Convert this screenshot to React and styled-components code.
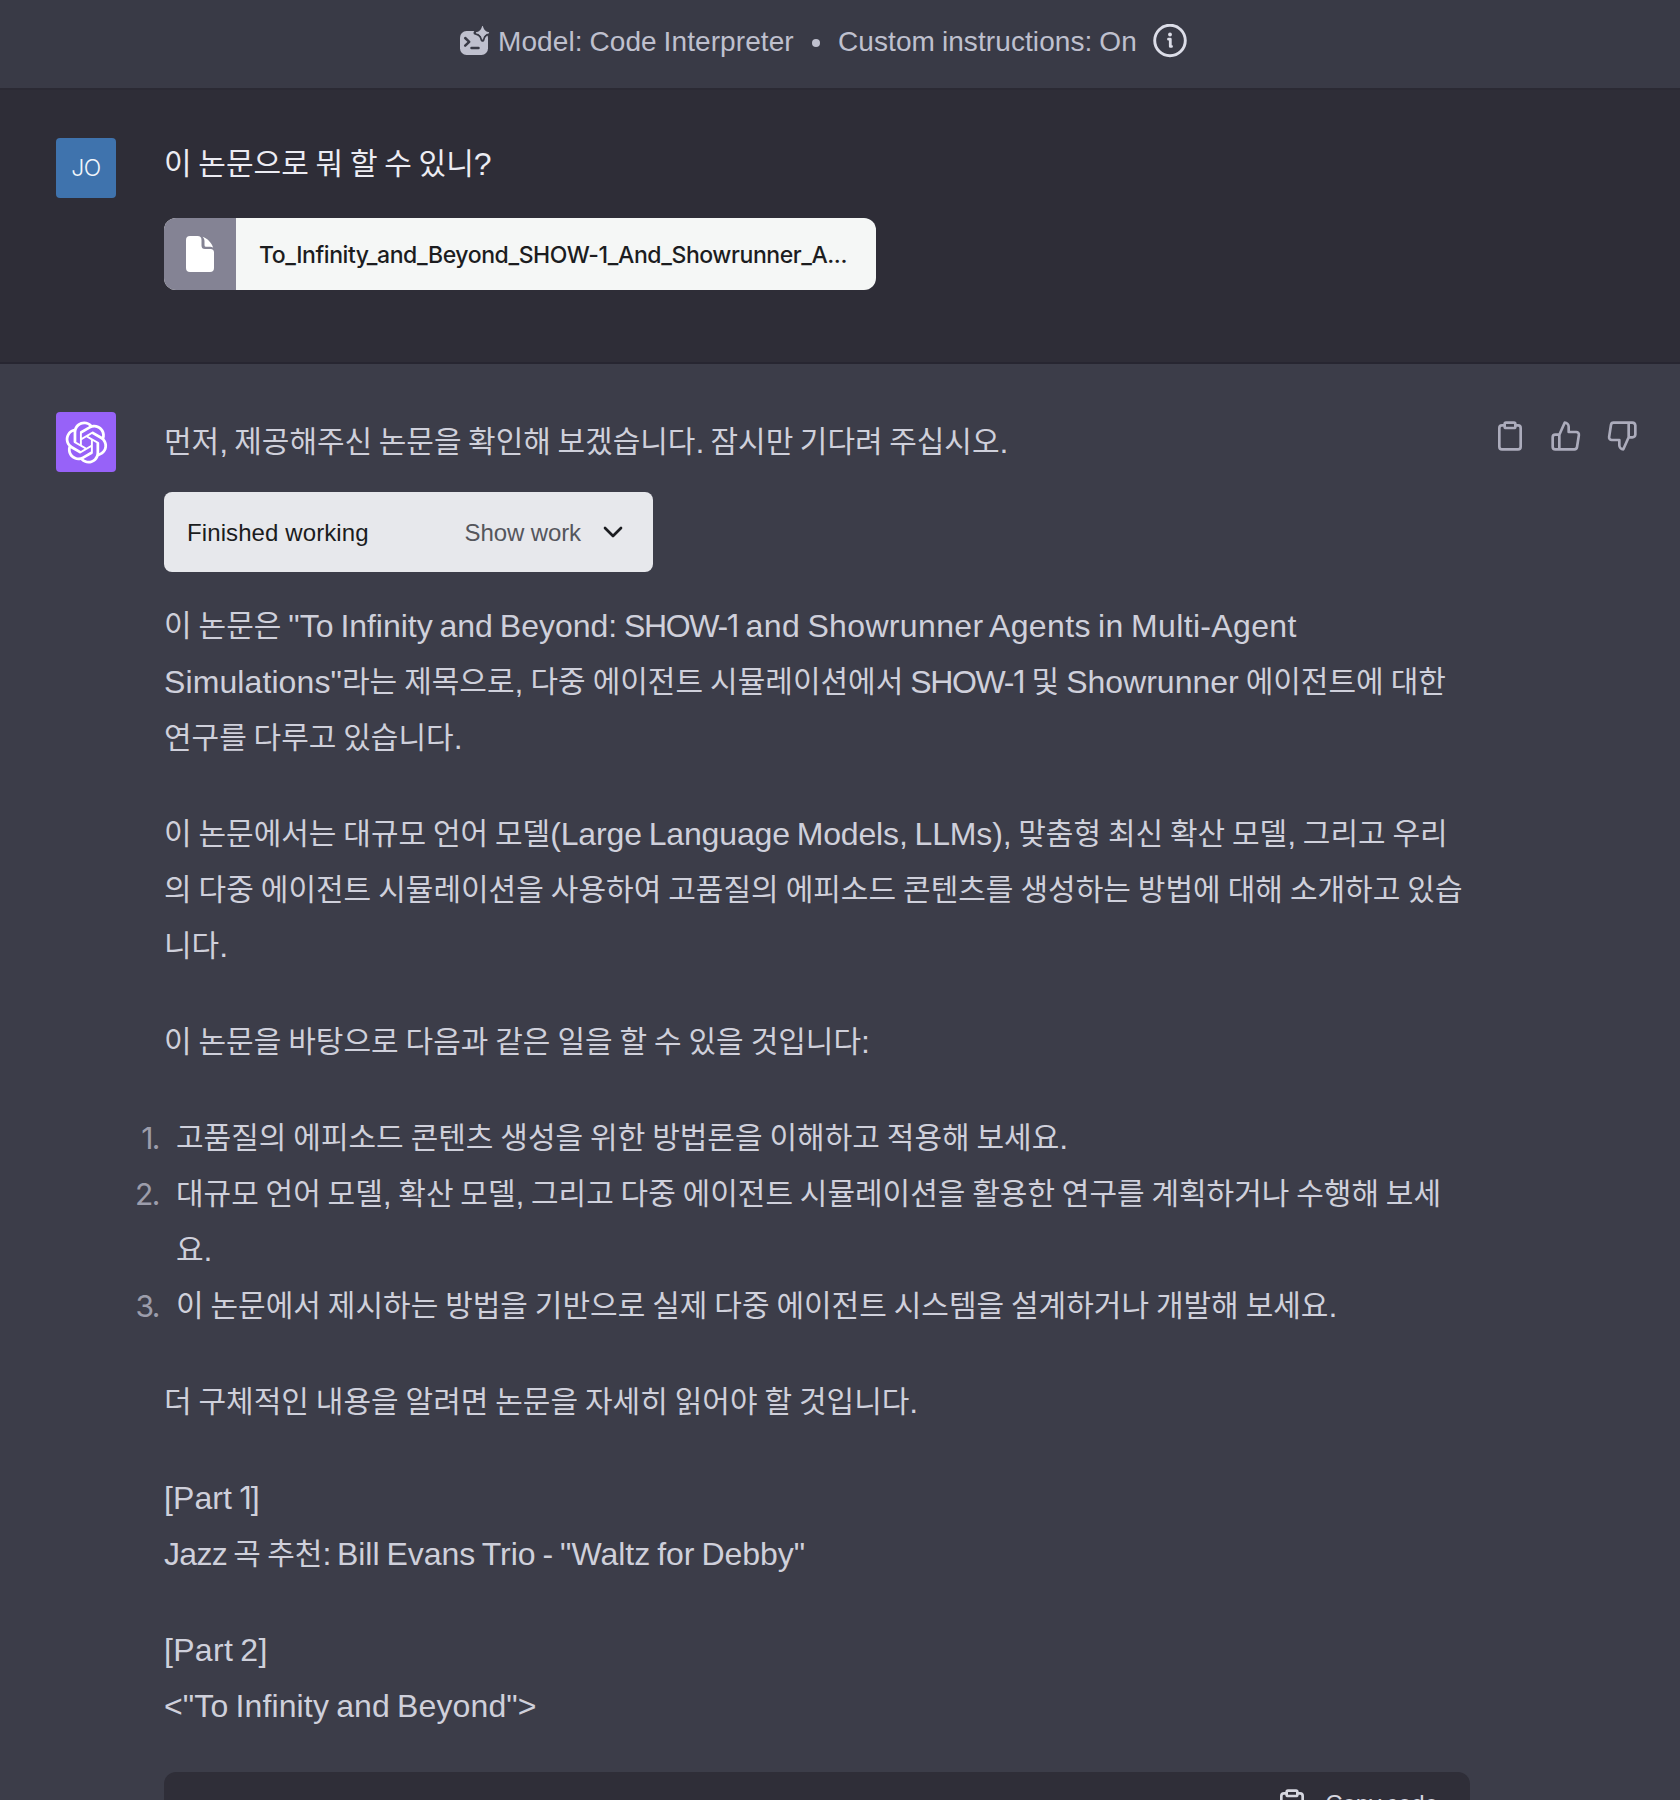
import React from 'react'
import styled, { createGlobalStyle } from 'styled-components'
import { FiChevronDown, FiClipboard, FiThumbsDown, FiThumbsUp } from 'react-icons/fi'

const GlobalStyle = createGlobalStyle`
  * {
    box-sizing: border-box;
  }

  body {
    background: #3c3d49;
    margin: 0;
  }
`

const Page = styled.div`
  background: #3c3d49;
  color: #cfd0db;
  font-family: 'Liberation Sans', 'Noto Sans CJK KR', sans-serif;
  height: 1800px;
  overflow: hidden;
  width: 1680px;
  word-spacing: -1.9px;
`

const ModelBar = styled.header`
  align-items: center;
  background: #393a46;
  border-bottom: 2px solid #2b2a34;
  color: #bfc0ce;
  display: flex;
  font-size: 28px;
  height: 90px;
  letter-spacing: 0.09px;
  padding: 0 0 6px 458px;
  white-space: nowrap;
  word-spacing: -1px;

  svg {
    flex: none;
  }
`

const ModelName = styled.span`
  margin-left: 8px;
  padding-top: 1px;
  width: 297px;
`

const Dot = styled.span`
  background: #bfc0ce;
  border-radius: 50%;
  height: 8px;
  margin: 3px 18px 0 17px;
  width: 8px;
`

const Instructions = styled.span`
  margin-right: 15px;
  padding-top: 1px;
  width: 300px;
`

const Turn = styled.section`
  background: ${p => p.$user ? '#2e2d37' : '#3c3d49'};
  border-bottom: ${p => p.$user ? '2px solid #272631' : 'none'};
  color: ${p => p.$user ? '#ececf3' : '#cfd0db'};
  display: flex;
  height: ${p => p.$user ? '274px' : 'auto'};
  padding: 48px 0 0 56px;
`

const Avatar = styled.div`
  align-items: center;
  background: ${p => p.$color};
  border-radius: 4px;
  color: #f2f6fb;
  display: flex;
  flex: none;
  font-family: 'Inter', sans-serif;
  font-size: 23px;
  font-weight: 300;
  height: 60px;
  justify-content: center;
  letter-spacing: -0.5px;
  margin-right: 48px;
  width: 60px;
`

const Body = styled.div`
  flex: none;
  margin-top: ${p => p.$top};
  width: 1306px;
`

const Paragraph = styled.p`
  font-size: 32px;
  line-height: 56px;
  margin: 0 0 ${p => p.$gap || '40px'};
  white-space: nowrap;
`

const Line = styled.span`
  display: block;
  height: 56px;
`

const Run = styled.span`
  letter-spacing: ${p => p.$track};
`

const Hangul = styled.span`
  font-family: 'Noto Sans CJK KR', sans-serif;
  font-size: 30px;
  letter-spacing: 0;
  line-height: 0;
  vertical-align: 1px;
`

const One = styled.span`
  font-family: 'Inter', sans-serif;
  font-size: 31px;
  letter-spacing: -1px;
  line-height: 0;
`

const List = styled.ol`
  font-size: 32px;
  line-height: 56px;
  list-style: none;
  margin: 0 0 40px;
  padding: 0;
  white-space: nowrap;
`

const Item = styled.li`
  display: flex;
  margin-left: -44px;
`

const Marker = styled.span`
  color: #9c9dab;
  flex: none;
  font-family: 'Inter', sans-serif;
  font-size: 30px;
  letter-spacing: -1.5px;
  margin-right: 17px;
  text-align: right;
  width: 39px;
`

const FileChip = styled.div`
  background: #f5f7f6;
  border-radius: 12px;
  display: flex;
  height: 72px;
  overflow: hidden;
  width: 712px;
`

const FileIcon = styled.div`
  align-items: center;
  background: #848394;
  display: flex;
  justify-content: center;
  width: 72px;
`

const FileName = styled.div`
  color: #1c1d1f;
  font-family: 'Inter', sans-serif;
  font-size: 23px;
  font-weight: 500;
  letter-spacing: -0.43px;
  line-height: 74px;
  padding-left: 23px;
  white-space: nowrap;
`

const WorkBox = styled.div`
  align-items: center;
  background: #e7e8ec;
  border-radius: 8px;
  color: #1b1c20;
  display: flex;
  font-size: 24px;
  height: 80px;
  justify-content: space-between;
  margin-bottom: 26px;
  padding: 0 24px 0 23px;
  width: 489px;
  word-spacing: 0;
`

const WorkLabel = styled.span`
  letter-spacing: ${p => p.$track};
  padding-top: 2px;
`

const ShowWork = styled.div`
  align-items: center;
  color: #55565c;
  display: flex;
  gap: 16px;

  svg {
    color: #1b1c20;
  }
`

const Actions = styled.div`
  color: #acacbc;
  display: flex;
  gap: 24px;
  margin: 8px 0 0 24px;
`

const CodeBlock = styled.div`
  background: #2f2e38;
  border-radius: 12px;
  height: 400px;
  margin-top: -2px;
`

const CodeBar = styled.div`
  align-items: center;
  color: #d6d7e0;
  display: flex;
  font-size: 24px;
  gap: 17px;
  height: 64px;
  justify-content: flex-end;
  padding-right: 32px;
`

// Hangul is set slightly smaller than the latin text around it
const mix = text => text.split(/([\uac00-\ud7a3]+|1)/).map((part, i) => {
  if (i % 2 === 0) return part
  return part === '1' ? <One key={ i }>{part}</One> : <Hangul key={ i }>{part}</Hangul>
})

// a line is a list of [text, tracking] runs
const TextLine = ({ runs }) => (
  <Line>
    { runs.map( ([text, track = '0']) => <Run key={ text } $track={ track }>{mix(text)}</Run> ) }
  </Line>
)

const Lines = ({ lines, gap }) => (
  <Paragraph $gap={ gap }>
    { lines.map( runs => <TextLine key={ runs[0][0] } runs={ runs } /> ) }
  </Paragraph>
)

const paragraphs = [
  [
    [['이 논문은 "To Infinity and Beyond: ', '-0.03px'], ['SHOW-1', '-1.4px'], [' and Showrunner Agents in Multi-Agent', '0.35px']],
    [['Simulations"', '0.1px'], ['라는 제목으로, 다중 에이전트 시뮬레이션에서 '], ['SHOW-1', '-1.4px'], [' 및 Showrunner 에이전트에 대한']],
    [['연구를 다루고 있습니다.', '-0.2px']]
  ],
  [
    [['이 논문에서는 대규모 언어 모델(Large Language Models, LLMs), 맞춤형 최신 확산 모델, 그리고 우리', '-0.15px']],
    [['의 다중 에이전트 시뮬레이션을 사용하여 고품질의 에피소드 콘텐츠를 생성하는 방법에 대해 소개하고 있습']],
    [['니다.']]
  ],
  [
    [['이 논문을 바탕으로 다음과 같은 일을 할 수 있을 것입니다:', '-0.1px']]
  ]
]

const items = [
  [
    [['고품질의 에피소드 콘텐츠 생성을 위한 방법론을 이해하고 적용해 보세요.', '-0.1px']]
  ],
  [
    [['대규모 언어 모델, 확산 모델, 그리고 다중 에이전트 시뮬레이션을 활용한 연구를 계획하거나 수행해 보세', '-0.2px']],
    [['요.']]
  ],
  [
    [['이 논문에서 제시하는 방법을 기반으로 실제 다중 에이전트 시스템을 설계하거나 개발해 보세요.', '-0.1px']]
  ]
]

const closing = [
  [
    [['더 구체적인 내용을 알려면 논문을 자세히 읽어야 할 것입니다.', '-0.1px']]
  ],
  [
    [['[Part 1]', '0.1px']],
    [['Jazz 곡 추천: ', '-0.7px'], ['Bill Evans Trio - "Waltz for Debby"', '-0.02px']]
  ],
  [
    [['[Part 2]', '0.3px']],
    [['<"To Infinity and Beyond">', '0.13px']]
  ]
]

const InterpreterIcon = () => (
  <svg width="32" height="32" viewBox="0 0 32 32" fill="none">
    <rect x="2" y="6" width="28" height="24" rx="6.5" fill="#bfc0ce" />
    <path d="M7.200 13l4 3.800-4 3.800M13.500 23h7" stroke="#393a46" strokeWidth="2.500" strokeLinecap="round" strokeLinejoin="round" />
    <path
      d="M24.500.8C25.300 5 27.300 7 31.500 7.800 27.300 8.600 25.300 10.600 24.500 14.800 23.700 10.600 21.700 8.600 17.500 7.800 21.700 7 23.700 5 24.500.8z"
      fill="#bfc0ce"
      stroke="#393a46"
      strokeWidth="4"
      strokeLinejoin="round"
      paintOrder="stroke"
    />
    <path
      d="M24.500 1.300C25.300 5 27.300 7 31 7.800 27.300 8.600 25.300 10.600 24.500 14.300 23.700 10.600 21.700 8.600 18 7.800 21.700 7 23.700 5 24.500 1.300z"
      fill="#bfc0ce"
      stroke="#bfc0ce"
      strokeWidth=".8"
      strokeLinejoin="round"
    />
  </svg>
)

const InfoIcon = () => (
  <svg width="34" height="34" viewBox="0 0 34 34" fill="none" stroke="#dcdde8" strokeLinecap="round" strokeLinejoin="round">
    <circle cx="17" cy="16.500" r="15.300" strokeWidth="2.900" />
    <circle cx="17" cy="10.500" r="1.900" fill="#dcdde8" stroke="none" />
    <path d="M15.500 15.200h1.800v7.200h1.200" strokeWidth="2.800" />
  </svg>
)

const PageIcon = () => (
  <svg width="28" height="36" viewBox="0 0 28 36" fill="#ffffff">
    <path d="M4 0h7.500a4 4 0 0 1 4 4v5.500a3.500 3.500 0 0 0 3.500 3.500h5.500A3.500 3.500 0 0 1 28 16.500V32a4 4 0 0 1-4 4H4a4 4 0 0 1-4-4V4a4 4 0 0 1 4-4z" />
    <path d="M16.500.8C21.500 2.500 25.500 6.500 27.200 11.800 26.200 11 25 10.700 23.500 10.700H20a1.500 1.500 0 0 1-1.500-1.500V5.500C18.500 3.500 17.800 2 16.500.8z" />
  </svg>
)

const Logo = () => (
  <svg width="43" height="43" viewBox="0 0 41 41" fill="#ffffff">
    <path d="M37.5324 16.8707C37.9808 15.5241 38.1363 14.0974 37.9886 12.6859C37.8409 11.2744 37.3934 9.91076 36.676 8.68622C35.6126 6.83404 33.9882 5.3676 32.0373 4.4985C30.0864 3.62941 27.9098 3.40259 25.8215 3.85078C24.8796 2.7893 23.7219 1.94125 22.4257 1.36341C21.1295 0.785575 19.7249 0.491269 18.3058 0.500197C16.1708 0.495044 14.0893 1.16803 12.3614 2.42214C10.6335 3.67624 9.34853 5.44666 8.6917 7.47815C7.30085 7.76286 5.98686 8.3414 4.8377 9.17505C3.68854 10.0087 2.73073 11.0782 2.02839 12.312C0.956464 14.1591 0.498905 16.2988 0.721698 18.4228C0.944492 20.5467 1.83612 22.5449 3.268 24.1293C2.81966 25.4759 2.66413 26.9026 2.81182 28.3141C2.95951 29.7256 3.40701 31.0892 4.12437 32.3138C5.18791 34.1659 6.8123 35.6322 8.76321 36.5013C10.7141 37.3704 12.8907 37.5973 14.9789 37.1492C15.9208 38.2107 17.0786 39.0587 18.3747 39.6366C19.6709 40.2144 21.0755 40.5087 22.4946 40.4998C24.6307 40.5054 26.7133 39.8321 28.4418 38.5772C30.1704 37.3223 31.4556 35.5506 32.1119 33.5179C33.5027 33.2332 34.8167 32.6547 35.9659 31.821C37.115 30.9874 38.0728 29.9178 38.7752 28.684C39.8458 26.8371 40.3023 24.6979 40.0789 22.5748C39.8556 20.4517 38.9639 18.4544 37.5324 16.8707ZM22.4978 37.8849C20.7443 37.8874 19.0459 37.2733 17.6994 36.1501C17.7601 36.117 17.8666 36.0586 17.936 36.0161L25.9004 31.4156C26.1003 31.3019 26.2663 31.137 26.3813 30.9378C26.4964 30.7386 26.5563 30.5124 26.5549 30.2825V19.0542L29.9213 20.998C29.9389 21.0068 29.9541 21.0198 29.9656 21.0359C29.977 21.052 29.9842 21.0707 29.9867 21.0902V30.3889C29.9842 32.375 29.1946 34.2791 27.7909 35.6841C26.3872 37.0892 24.4838 37.8806 22.4978 37.8849ZM6.39227 31.0064C5.51397 29.4888 5.19742 27.7107 5.49804 25.9832C5.55718 26.0187 5.66048 26.0818 5.73461 26.1244L13.699 30.7248C13.8975 30.8408 14.1233 30.902 14.3532 30.902C14.583 30.902 14.8088 30.8408 15.0073 30.7248L24.731 25.1103V28.9979C24.7321 29.0177 24.7283 29.0376 24.7199 29.0556C24.7115 29.0736 24.6988 29.0893 24.6829 29.1012L16.6317 33.7497C14.9096 34.7416 12.8643 35.0097 10.9447 34.4954C9.02506 33.9811 7.38785 32.7263 6.39227 31.0064ZM4.29707 13.6194C5.17156 12.0998 6.55279 10.9364 8.19885 10.3327C8.19885 10.4013 8.19491 10.5228 8.19491 10.6071V19.808C8.19351 20.0378 8.25334 20.2638 8.36823 20.4629C8.48312 20.6619 8.64893 20.8267 8.84863 20.9404L18.5723 26.5542L15.206 28.4979C15.1894 28.5089 15.1703 28.5155 15.1505 28.5173C15.1307 28.5191 15.1107 28.516 15.0924 28.5082L7.04046 23.8557C5.32135 22.8601 4.06716 21.2235 3.55289 19.3046C3.03862 17.3858 3.30624 15.3413 4.29707 13.6194ZM31.955 20.0556L22.2312 14.4411L25.5976 12.4981C25.6142 12.4872 25.6333 12.4805 25.6531 12.4787C25.6729 12.4769 25.6928 12.4801 25.7111 12.4879L33.7631 17.1364C34.9967 17.849 36.0017 18.8982 36.6606 20.1613C37.3194 21.4244 37.6047 22.849 37.4832 24.2684C37.3617 25.6878 36.8382 27.0432 35.9743 28.1759C35.1103 29.3086 33.9415 30.1717 32.6047 30.6641C32.6047 30.5947 32.6047 30.4733 32.6047 30.3889V21.188C32.6066 20.9586 32.5474 20.7328 32.4332 20.5338C32.319 20.3348 32.154 20.1698 31.955 20.0556ZM35.3055 15.0128C35.2464 14.9765 35.1431 14.9142 35.069 14.8717L27.1045 10.2712C26.906 10.1554 26.6803 10.0943 26.4504 10.0943C26.2206 10.0943 25.9948 10.1554 25.7963 10.2712L16.0726 15.8858V11.9982C16.0715 11.9783 16.0753 11.9585 16.0837 11.9405C16.0921 11.9225 16.1048 11.9068 16.1207 11.8949L24.1719 7.25025C25.4053 6.53903 26.8158 6.19376 28.2383 6.25482C29.6608 6.31589 31.0364 6.78077 32.2044 7.59508C33.3723 8.40939 34.2842 9.53945 34.8334 10.8531C35.3826 12.1667 35.5464 13.6095 35.3055 15.0128ZM14.2424 21.9419L10.8752 19.9981C10.8576 19.9893 10.8423 19.9763 10.8309 19.9602C10.8195 19.9441 10.8122 19.9254 10.8098 19.9058V10.6071C10.8107 9.18295 11.2173 7.78848 11.9819 6.58696C12.7466 5.38544 13.8377 4.42659 15.1275 3.82264C16.4173 3.21869 17.8524 2.99464 19.2649 3.1767C20.6775 3.35876 22.0089 3.93941 23.1034 4.85067C23.0427 4.88379 22.937 4.94215 22.8668 4.98473L14.9024 9.58517C14.7025 9.69878 14.5366 9.86356 14.4215 10.0626C14.3065 10.2616 14.2466 10.4877 14.2479 10.7175L14.2424 21.9419ZM16.071 17.9991L20.4018 15.4978L24.7325 17.9975V22.9985L20.4018 25.4983L16.071 22.9985V17.9991Z" />
  </svg>
)

function App () {
  return (
    <Page>
      <GlobalStyle />
      <ModelBar>
        <InterpreterIcon />
        <ModelName>Model: Code Interpreter</ModelName>
        <Dot />
        <Instructions>Custom instructions: On</Instructions>
        <InfoIcon />
      </ModelBar>
      <Turn $user>
        <Avatar $color="#3f73ad">JO</Avatar>
        <Body $top="-2px">
          <Lines gap="26px" lines={ [[['이 논문으로 뭐 할 수 있니?', '-0.25px']]] } />
          <FileChip>
            <FileIcon><PageIcon /></FileIcon>
            <FileName>To_Infinity_and_Beyond_SHOW-1_And_Showrunner_A...</FileName>
          </FileChip>
        </Body>
      </Turn>
      <Turn>
        <Avatar $color="#9762f8"><Logo /></Avatar>
        <Body $top="2px">
          <Lines gap="22px" lines={ [[['먼저, 제공해주신 논문을 확인해 보겠습니다. 잠시만 기다려 주십시오.', '-0.45px']]] } />
          <WorkBox>
            <WorkLabel $track="0.1px">Finished working</WorkLabel>
            <ShowWork>
              <WorkLabel $track="-0.1px">Show work</WorkLabel>
              <FiChevronDown size={ 32 } />
            </ShowWork>
          </WorkBox>
          { paragraphs.map( lines => <Lines key={ lines[0][0][0] } lines={ lines } /> ) }
          <List>
            {
              items.map( (lines, i) => (
                <Item key={ lines[0][0][0] }>
                  <Marker>{i + 1}.</Marker>
                  <div>
                    { lines.map( runs => <TextLine key={ runs[0][0] } runs={ runs } /> ) }
                  </div>
                </Item>
              ) )
            }
          </List>
          { closing.map( lines => <Lines key={ lines[0][0][0] } lines={ lines } /> ) }
          <CodeBlock>
            <CodeBar>
              <FiClipboard size={ 32 } />
              Copy code
            </CodeBar>
          </CodeBlock>
        </Body>
        <Actions>
          <FiClipboard size={ 32 } />
          <FiThumbsUp size={ 32 } />
          <FiThumbsDown size={ 32 } />
        </Actions>
      </Turn>
    </Page>
  )
}

export default App
